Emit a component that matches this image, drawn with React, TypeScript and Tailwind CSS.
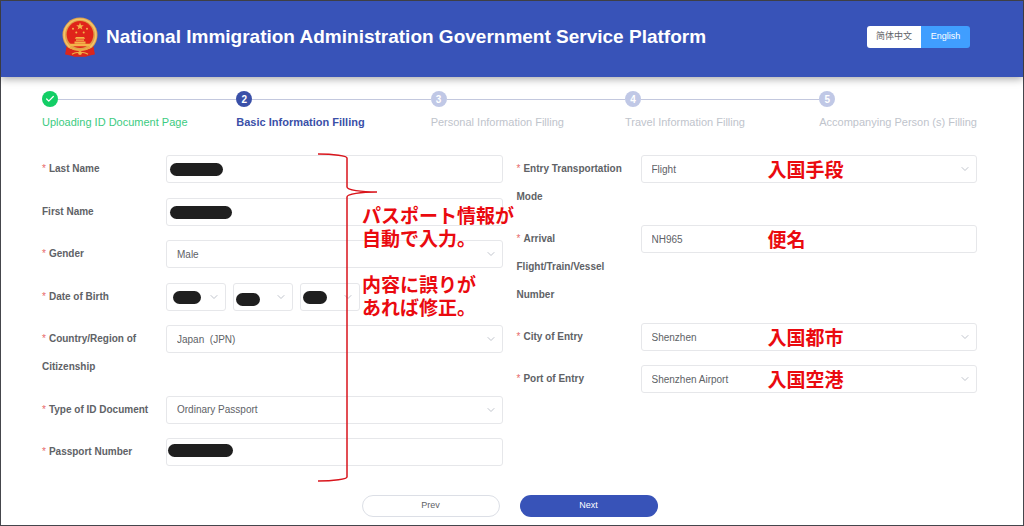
import type { ReactNode } from "react";
import { Check, ChevronDown } from "lucide-react";

const steps = [
  "Uploading ID Document Page",
  "Basic Information Filling",
  "Personal Information Filling",
  "Travel Information Filling",
  "Accompanying Person (s) Filling",
];

const controlClass =
  "block h-7 w-full appearance-none rounded-[3px] border border-[#e6e7ea] bg-white px-2.5 text-[10px] text-[#606266] outline-none";

function Emblem() {
  return (
    <svg viewBox="0 0 36 40" className="h-10 w-9 shrink-0" aria-hidden="true">
      <path d="M5 28 L31 28 L33 37.5 L28 37 L24 39.5 L12 39.5 L8 37 L3 37.5 Z" fill="#d9261c" />
      <circle cx="18" cy="18" r="17.5" fill="#e0a04a" />
      <circle cx="18" cy="18" r="15.8" fill="none" stroke="#f3c468" strokeWidth="1.6" />
      <circle cx="18" cy="17.5" r="13.4" fill="#e0241a" />
      <path
        d="M18 5.6l1 2.6h2.8l-2.2 1.7.8 2.7-2.4-1.6-2.4 1.6.8-2.7-2.2-1.7H17z"
        fill="#f3b44a"
      />
      <g fill="#f3b44a">
        <circle cx="11" cy="11.8" r="1" />
        <circle cx="25" cy="11.8" r="1" />
        <circle cx="14.3" cy="15.5" r="1" />
        <circle cx="21.7" cy="15.5" r="1" />
        <path d="M14 20h8l1.2 1.8H12.8zM14 22.4h8v1.4h-8zM12.5 24.4h11v2h-11zM7.5 26.8h21v2.4h-21z" />
      </g>
      <path d="M4 30.5 Q18 36 32 30.5 L32 37.4 L24 39.5 L12 39.5 L4 37.4 Z" fill="#d9261c" />
      <path
        d="M8 30q4 3.4 10 3.4T28 30"
        fill="none"
        stroke="#e9a83f"
        strokeWidth="1.6"
      />
      <path
        d="M10 37.2q4-2.6 8-1.2 4-1.4 8 1.2"
        fill="none"
        stroke="#f0b548"
        strokeWidth="1.2"
      />
      <circle cx="18" cy="36" r="1.9" fill="#f0b548" />
    </svg>
  );
}

function Field({ label, htmlFor, required = true, children }: {
  label: string;
  htmlFor: string;
  required?: boolean;
  children: ReactNode;
}) {
  return (
    <div className="flex items-start">
      <label htmlFor={htmlFor} className="w-[124px] shrink-0 pr-3 text-[10px] leading-7 font-bold text-[#606266]">
        {required && <span className="mr-[3px] font-normal text-[#e86a6a]">*</span>}
        {label}
      </label>
      <div className="relative flex min-w-0 flex-1 gap-[7px]">{children}</div>
    </div>
  );
}

function Select({ id, value = "", label, children }: {
  id: string;
  value?: string;
  label?: string;
  children?: ReactNode;
}) {
  return (
    <div className="relative min-w-0 flex-1">
      <select id={id} aria-label={label} defaultValue={value} className={controlClass}>
        <option value={value}>{value}</option>
      </select>
      <ChevronDown
        className="pointer-events-none absolute top-2 right-1.5 size-3 text-[#c0c4cc]"
        strokeWidth={2}
      />
      {children}
    </div>
  );
}

// Solid bar that hides a private value
function Mask({ className }: { className: string }) {
  return <span className={`pointer-events-none absolute rounded-full bg-[#1f1f1f] ${className}`} />;
}

function Note({ children }: { children: ReactNode }) {
  return (
    <span className="pointer-events-none absolute top-0 left-[127px] font-['Noto_Sans_CJK_JP',sans-serif] text-[19px] leading-7 font-bold whitespace-nowrap text-[#ea0a0f]">
      {children}
    </span>
  );
}

function Header() {
  return (
    <header className="relative flex h-[76px] items-center justify-between bg-[#3853b8] pr-[53px] pb-1 pl-[61px] shadow-[0_2px_8px_rgba(0,0,0,0.35)]">
      <div className="flex items-center gap-2">
        <Emblem />
        <h1 className="text-[19px] font-bold whitespace-nowrap text-white">
          National Immigration Administration Government Service Platform
        </h1>
      </div>
      <div className="flex h-[22px] overflow-hidden rounded-[3px] text-[9px]">
        <button type="button" className="w-[54px] bg-white text-[#606266]">
          简体中文
        </button>
        <button type="button" className="w-[49px] bg-[#409eff] text-white">
          English
        </button>
      </div>
    </header>
  );
}

function Steps() {
  return (
    <ol className="flex pt-3.5">
      {steps.map((step, i) => {
        const done = i === 0;
        const active = i === 1;
        const last = i === steps.length - 1;
        return (
          <li key={step} className={last ? "shrink-0" : "min-w-0 flex-1"}>
            <div className="flex items-center">
              <span
                className={`flex size-4 shrink-0 items-center justify-center rounded-full text-[10px] font-bold text-white ${
                  done ? "bg-[#13ce66]" : active ? "bg-[#3a50a8]" : "bg-[#c0c8e6]"
                }`}
              >
                {done ? <Check className="size-2.5" strokeWidth={3} /> : i + 1}
              </span>
              {!last && <span className="h-px flex-1 bg-[#c3c8de]" />}
            </div>
            <div
              className={`mt-1.5 text-[11px] leading-[18px] whitespace-nowrap ${
                done ? "text-[#3ccb7f]" : active ? "font-bold text-[#3a50a8]" : "text-[#c0c4cc]"
              }`}
            >
              {step}
            </div>
          </li>
        );
      })}
    </ol>
  );
}

function PassportFields() {
  return (
    <div className="relative flex flex-col justify-between gap-3.5">
      <Field label="Last Name" htmlFor="last-name">
        <input id="last-name" type="text" className={controlClass} />
        <Mask className="top-2 left-1 h-[13px] w-[53px]" />
      </Field>
      <Field label="First Name" htmlFor="first-name" required={false}>
        <input id="first-name" type="text" className={controlClass} />
        <Mask className="top-2 left-1 h-[13px] w-[62px]" />
      </Field>
      <Field label="Gender" htmlFor="gender">
        <Select id="gender" value="Male" />
      </Field>
      <Field label="Date of Birth" htmlFor="birth-year">
        <div className="flex w-[194px] gap-[7px]">
          <Select id="birth-year" label="Year of birth">
            <Mask className="top-2 left-[7px] h-[13px] w-7" />
          </Select>
          <Select id="birth-month" label="Month of birth">
            <Mask className="top-2.5 left-[3px] h-[13px] w-6" />
          </Select>
          <Select id="birth-day" label="Day of birth">
            <Mask className="top-2 left-[3px] h-[13px] w-6" />
          </Select>
        </div>
      </Field>
      <Field label="Country/Region of Citizenship" htmlFor="citizenship">
        <Select id="citizenship" value={"Japan\u00a0 (JPN)"} />
      </Field>
      <Field label="Type of ID Document" htmlFor="document-type">
        <Select id="document-type" value="Ordinary Passport" />
      </Field>
      <Field label="Passport Number" htmlFor="passport-number">
        <input id="passport-number" type="text" className={controlClass} />
        <Mask className="top-1.5 left-0.5 h-[13px] w-[65px]" />
      </Field>

      {/* Bracket and remark over the passport fields */}
      <svg
        viewBox="0 0 62 330"
        className="pointer-events-none absolute -top-0.5 left-[275px] h-[330px] w-[62px]"
        fill="none"
        stroke="#d9151c"
        strokeWidth="1.5"
        aria-hidden="true"
      >
        <path d="M1 1 C17 1 30 3 30 5 V34 C30 37 44 39 60 39 C44 39 30 41 30 44 V324 C30 326 17 328 1 328" />
      </svg>
      <div className="pointer-events-none absolute top-12 left-80 space-y-[23px] font-['Noto_Sans_CJK_JP',sans-serif] text-[19px] leading-[23px] font-bold whitespace-nowrap text-[#ea0a0f]">
        <p>
          パスポート情報が
          <br />
          自動で入力。
        </p>
        <p>
          内容に誤りが
          <br />
          あれば修正。
        </p>
      </div>
    </div>
  );
}

function EntryFields() {
  return (
    <div className="flex flex-col gap-3.5">
      <Field label="Entry Transportation Mode" htmlFor="transport">
        <Select id="transport" value="Flight" />
        <Note>入国手段</Note>
      </Field>
      <Field label="Arrival Flight/Train/Vessel Number" htmlFor="flight-number">
        <input id="flight-number" type="text" defaultValue="NH965" className={controlClass} />
        <Note>便名</Note>
      </Field>
      <Field label="City of Entry" htmlFor="city">
        <Select id="city" value="Shenzhen" />
        <Note>入国都市</Note>
      </Field>
      <Field label="Port of Entry" htmlFor="port">
        <Select id="port" value="Shenzhen Airport" />
        <Note>入国空港</Note>
      </Field>
    </div>
  );
}

export default function App() {
  return (
    <div className="flex min-h-screen flex-col border border-[#45464c] bg-white font-['Liberation_Sans','Noto_Sans_CJK_SC',sans-serif]">
      <Header />
      <main className="flex flex-1 flex-col pr-[46px] pl-[41px]">
        <Steps />
        <form className="mt-6 flex flex-1 flex-col" onSubmit={(e) => e.preventDefault()}>
          <div className="grid flex-1 grid-cols-2 gap-3.5">
            <PassportFields />
            <EntryFields />
          </div>
          <div className="mt-[29px] mb-2 flex justify-center gap-5 text-[9px]">
            <button type="button" className="h-[22px] w-[138px] rounded-full border border-[#dcdfe6] text-[#606266]">
              Prev
            </button>
            <button type="submit" className="h-[22px] w-[138px] rounded-full bg-[#3853b8] text-white">
              Next
            </button>
          </div>
        </form>
      </main>
    </div>
  );
}
